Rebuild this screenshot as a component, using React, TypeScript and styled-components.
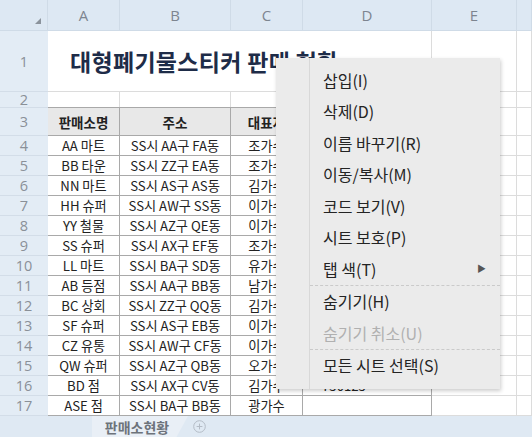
import styled, { createGlobalStyle } from "styled-components";

const GlobalStyle = createGlobalStyle`
	body {
		margin: 0;
		overflow: hidden;
		background: #ffffff;
		font-family: "Noto Sans CJK KR", "Noto Sans", sans-serif;
	}
`;

const columns = ["A", "B", "C", "D", "E", ""];

// D열은 메뉴에 가려서 16행만 보임
const rows = [
	["AA 마트", "SS시 AA구 FA동", "조가수", ""],
	["BB 타운", "SS시 ZZ구 EA동", "조가수", ""],
	["NN 마트", "SS시 AS구 AS동", "김가수", ""],
	["HH 슈퍼", "SS시 AW구 SS동", "이가수", ""],
	["YY 철물", "SS시 AZ구 QE동", "이가수", ""],
	["SS 슈퍼", "SS시 AX구 EF동", "조가수", ""],
	["LL 마트", "SS시 BA구 SD동", "유가수", ""],
	["AB 등점", "SS시 AA구 BB동", "남가수", ""],
	["BC 상회", "SS시 ZZ구 QQ동", "김가수", ""],
	["SF 슈퍼", "SS시 AS구 EB동", "이가수", ""],
	["CZ 유통", "SS시 AW구 CF동", "이가수", ""],
	["QW 슈퍼", "SS시 AZ구 QB동", "오가수", ""],
	["BD 점", "SS시 AX구 CV동", "김가수", "750125"],
	["ASE 점", "SS시 BA구 BB동", "광가수", ""],
];

const menuGroups = [
	[
		{ label: "삽입(I)" },
		{ label: "삭제(D)" },
		{ label: "이름 바꾸기(R)" },
		{ label: "이동/복사(M)" },
		{ label: "코드 보기(V)" },
		{ label: "시트 보호(P)" },
		{ label: "탭 색(T)", sub: true },
	],
	[{ label: "숨기기(H)" }, { label: "숨기기 취소(U)", disabled: true }],
	[{ label: "모든 시트 선택(S)" }],
];

const App = () => {
	return (
		<>
			<GlobalStyle />
			<Page>
				<Sheet>
					<Corner>
						<CornerMark />
					</Corner>
					{columns.map((c, i) => (
						<ColHead key={i}>{c}</ColHead>
					))}

					<RowHead>1</RowHead>
					<Title>대형폐기물스티커 판매 현황</Title>
					<Cell />
					<Cell />

					<RowHead>2</RowHead>
					{[0, 1, 2, 3, 4, 5].map((i) => (
						<Cell key={i} />
					))}

					<RowHead>3</RowHead>
					<TableBox>
						<Th>판매소명</Th>
						<Th>주소</Th>
						<Th>대표자</Th>
						<Th></Th>
						{rows.map((r, i) =>
							r.map((v, j) => (
								<Td key={`${i}-${j}`} left={j === 3}>
									{v}
								</Td>
							))
						)}
					</TableBox>
					<Cell />
					<Cell />
					{rows.map((_, i) => (
						<RowBlock key={i}>
							<RowHead>{i + 4}</RowHead>
							<Cell />
							<Cell />
						</RowBlock>
					))}
				</Sheet>

				<TabBar>
					<TabSpacer />
					<SheetTab>판매소현황</SheetTab>
					<AddTab>
						<svg width="13" height="13" viewBox="0 0 13 13">
							<circle cx="6.5" cy="6.5" r="5.8" fill="none" stroke="#b4bcc6" strokeWidth="1" />
							<path d="M6.5 3.6v5.8M3.6 6.5h5.8" stroke="#b4bcc6" strokeWidth="1" />
						</svg>
					</AddTab>
				</TabBar>

				<Menu>
					{menuGroups.map((group, gi) => (
						<MenuGroup key={gi} first={gi === 0}>
							{group.map((item) => (
								<MenuItem key={item.label} disabled={item.disabled}>
									<span>{item.label}</span>
									{item.sub && <SubArrow>▶</SubArrow>}
								</MenuItem>
							))}
						</MenuGroup>
					))}
				</Menu>
			</Page>
		</>
	);
};

const Page = styled.div`
	position: relative;
	width: 532px;
	height: 437px;
	overflow: hidden;
`;

const Sheet = styled.div`
	display: grid;
	grid-template-columns: 48px 72px 111px 72px 129px 85px 15px;
	grid-template-rows: 31px 61px 16px 28px repeat(14, 20px);
	background: #ffffff;
`;

const Corner = styled.div`
	background: #dde8f3;
	border-right: 1px solid #cfdbe7;
	border-bottom: 1px solid #cfdbe7;
	box-sizing: border-box;
	position: relative;
`;

const CornerMark = styled.div`
	position: absolute;
	right: 6px;
	bottom: 6px;
	width: 0;
	height: 0;
	border-left: 6px solid transparent;
	border-bottom: 6px solid #8b939c;
`;

const ColHead = styled.div`
	display: flex;
	align-items: center;
	justify-content: center;
	background: #dde8f3;
	border-right: 1px solid #cfdbe7;
	border-bottom: 1px solid #cfdbe7;
	box-sizing: border-box;
	color: #7d8590;
	font-size: 15px;
	font-family: "Open Sans", "Noto Sans", sans-serif;
`;

const RowHead = styled.div`
	display: flex;
	align-items: center;
	justify-content: center;
	background: #e3ecf5;
	border-bottom: 1px solid #d3dde8;
	box-sizing: border-box;
	color: #8a9098;
	font-size: 14.5px;
	font-family: "Open Sans", "Noto Sans", sans-serif;
	grid-column: 1;
`;

const RowBlock = styled.div`
	display: contents;
`;

const Cell = styled.div`
	border-right: 1px solid #dcdcdc;
	border-bottom: 1px solid #dcdcdc;
	box-sizing: border-box;
`;

const Title = styled.div`
	grid-column: 2 / 6;
	display: flex;
	align-items: center;
	padding-left: 22px;
	border-right: 1px solid #dcdcdc;
	border-bottom: 1px solid #dcdcdc;
	box-sizing: border-box;
	font-size: 23px;
	font-weight: 700;
	color: #1e2c48;
	letter-spacing: 0.3px;
`;

const TableBox = styled.div`
	grid-column: 2 / 6;
	grid-row: 4 / 19;
	display: grid;
	grid-template-columns: 72px 111px 72px 129px;
	grid-template-rows: 28px repeat(14, 20px);
	border-top: 1px solid #a9a9a9;
	margin-top: -1px;
`;

const Th = styled.div`
	display: flex;
	align-items: center;
	justify-content: center;
	background: #e8e8e8;
	border-right: 1px solid #a9a9a9;
	border-bottom: 1px solid #a9a9a9;
	box-sizing: border-box;
	font-size: 13.5px;
	font-weight: 700;
	color: #222;
`;

interface ITd {
	left?: boolean;
}

const Td = styled.div<ITd>`
	display: flex;
	align-items: center;
	justify-content: ${(props) => (props.left ? "flex-start" : "center")};
	padding-left: ${(props) => (props.left ? "19px" : "0")};
	border-right: 1px solid #a9a9a9;
	border-bottom: 1px solid #a9a9a9;
	box-sizing: border-box;
	font-size: 13.2px;
	color: #222;
	white-space: nowrap;
	overflow: hidden;
`;

const TabBar = styled.div`
	display: flex;
	align-items: stretch;
	height: 21px;
	background: #dfe9f3;
`;

const TabSpacer = styled.div`
	width: 92px;
`;

const SheetTab = styled.div`
	width: 96px;
	display: flex;
	align-items: center;
	justify-content: center;
	padding-right: 6px;
	box-sizing: border-box;
	background: #e9eff6;
	clip-path: polygon(0 0, 100% 0, 88% 100%, 0 100%);
	font-size: 14px;
	font-weight: 700;
	color: #6d737b;
`;

const AddTab = styled.div`
	display: flex;
	align-items: center;
	margin-left: 5px;
`;

const Menu = styled.div`
	position: absolute;
	left: 276px;
	top: 58px;
	width: 224px;
	padding: 6px 0 8px;
	box-sizing: border-box;
	background: #ebebeb;
	box-shadow: 1px 2px 4px rgba(0, 0, 0, 0.2);
	background-image: linear-gradient(#d8d8d8, #d8d8d8);
	background-size: 1px 100%;
	background-position: 33px 0;
	background-repeat: no-repeat;
`;

interface IMenuGroup {
	first?: boolean;
}

const MenuGroup = styled.div<IMenuGroup>`
	margin-left: 34px;
	border-top: ${(props) => (props.first ? "none" : "1px dashed #cacaca")};
`;

interface IMenuItem {
	disabled?: boolean;
}

const MenuItem = styled.div<IMenuItem>`
	display: flex;
	align-items: center;
	justify-content: space-between;
	height: 31.5px;
	padding: 0 14px 0 13px;
	font-size: 16px;
	color: ${(props) => (props.disabled ? "#b0b0b0" : "#242424")};
`;

const SubArrow = styled.span`
	font-size: 9px;
	color: #555;
`;

export default App;
